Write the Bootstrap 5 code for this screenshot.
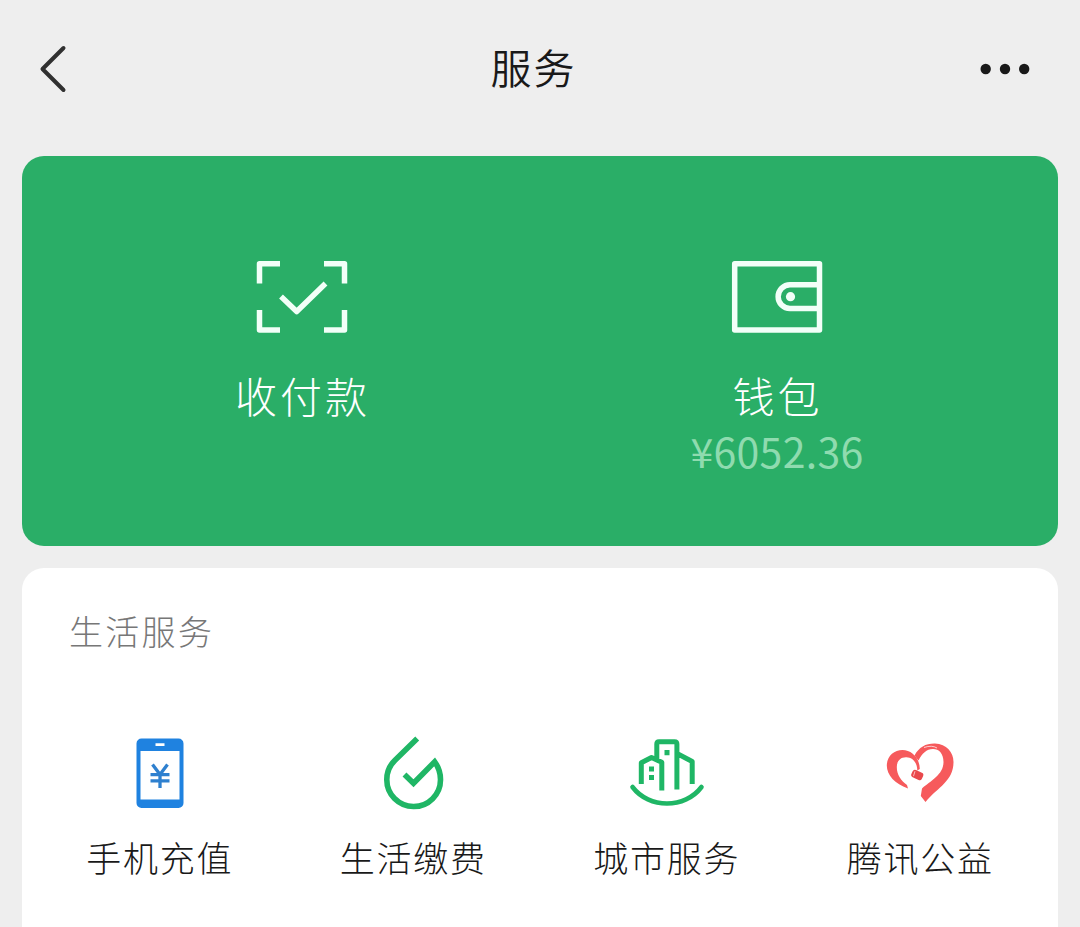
<!DOCTYPE html>
<html lang="zh-CN">
<head>
<meta charset="utf-8">
<meta name="viewport" content="width=device-width, initial-scale=1">
<title>服务</title>
<link href="https://cdn.jsdelivr.net/npm/bootstrap@5.3.0/dist/css/bootstrap.min.css" rel="stylesheet">
<style>
  body { background: #eee; font-family: "Noto Sans CJK SC", sans-serif; font-weight: 300; color: #191919; height: 100vh; }
  svg { display: block; fill: none; }
  .topbar { height: 138px; padding: 0 50px 0 39px; margin-bottom: 18px; }
  .topbar h1 { font-size: 41px; font-weight: 350; line-height: 60px; letter-spacing: 2px; padding-left: 20px; margin-top: -6px; }
  .panel { margin: 0 22px; border-radius: 22px; }
  .pay { background: #2aae67; height: 389.5px; padding: 105px 44px 0 42px; margin-bottom: 22.5px; }
  .pay-label { font-size: 42px; line-height: 60px; letter-spacing: 3px; margin: 32px -2px 0 0; }
  .amount { font-size: 41px; font-weight: 400; line-height: 40px; letter-spacing: .3px; color: #8fdbaf; margin: 5px 0 0 1px; }
  .life { border-radius: 22px 22px 0 0; padding: 43px 11px 0; }
  .life h2 { font-size: 34px; font-weight: 300; line-height: 40px; letter-spacing: 2.3px; color: #777; margin: 0 0 82px 36px; }
  .service-icon { height: 80px; }
  .service-label { font-size: 35px; line-height: 50px; letter-spacing: 1.7px; margin: 19px 0 0; }
</style>
</head>
<body class="d-flex flex-column overflow-hidden">
<header class="topbar d-flex align-items-center justify-content-between flex-shrink-0">
  <svg width="28" height="48" viewBox="39 45 28 48" stroke="#303030" stroke-width="4" stroke-linecap="round" stroke-linejoin="round"><path d="M63.500 48 42.500 69 63.500 90"/></svg>
  <h1 class="mb-0">服务</h1>
  <svg width="50" height="12" viewBox="980 63 50 12"><g fill="#191919"><circle cx="985.700" cy="69" r="5.200"/><circle cx="1005" cy="69" r="5.200"/><circle cx="1024.200" cy="69" r="5.200"/></g></svg>
</header>

<section class="panel pay flex-shrink-0">
  <div class="row g-0 text-center text-white">
    <div class="col-6 d-flex flex-column align-items-center">
      <svg width="92" height="72" viewBox="256 261 92 72" stroke="#f2fff8" stroke-width="5.500" stroke-linejoin="round"><path d="M259.500 283.500v-19.700H280M324 263.800h20.500v19.700M344.500 310v20H324M280 330h-20.500v-20M281 296.500l15.700 15L325.500 283.500"/></svg>
      <div class="pay-label">收付款</div>
    </div>
    <div class="col-6 d-flex flex-column align-items-center">
      <svg width="92" height="72" viewBox="731 261 92 72" stroke="#f2fff8" stroke-width="5.500" stroke-linejoin="round"><rect x="734.700" y="263.800" width="84.800" height="66.200"/><path d="M819.500 284.800H790a11.800 11.800 0 0 0 0 23.700h29.500"/><circle cx="790.500" cy="296.700" r="4.600" fill="#f2fff8" stroke="none"/></svg>
      <div class="pay-label">钱包</div>
      <div class="amount">¥6052.36</div>
    </div>
  </div>
</section>

<section class="panel life bg-white flex-grow-1">
  <h2>生活服务</h2>
  <div class="row g-0 text-center">
    <div class="col-3 d-flex flex-column align-items-center">
      <svg class="service-icon" width="80" viewBox="120 733 80 80"><path fill="#1f82e0" fill-rule="evenodd" d="M141.500 738.500h37a5 5 0 0 1 5 5v59.500a5 5 0 0 1-5 5h-37a5 5 0 0 1-5-5v-59.500a5 5 0 0 1 5-5zM140.500 751v48.500h39V751zM155.500 743.300v2.700h9v-2.700z"/><path stroke="#2e80cf" stroke-width="3.300" d="M152.500 764.500 160 774.500 167.500 764.500M160 774v14M150.500 774.600h19M150.500 780.800h19"/></svg>
      <div class="service-label">手机充值</div>
    </div>
    <div class="col-3 d-flex flex-column align-items-center">
      <svg class="service-icon" width="80" viewBox="373 733 80 80" stroke="#1fb665" stroke-width="5.600"><path d="M417.200 738.500 395 760.200C389.500 765.500 386.800 771 386.800 779.500A26.800 26.800 0 0 0 413.500 806.500A26.800 26.800 0 0 0 440.500 779.500C440.500 772.500 438.500 767 434.700 761.800L413.500 783.200 404.500 774.500"/></svg>
      <div class="service-label">生活缴费</div>
    </div>
    <div class="col-3 d-flex flex-column align-items-center">
      <svg class="service-icon" width="80" viewBox="627 733 80 80" stroke="#1fb665" stroke-width="5" stroke-linejoin="round"><path d="M641.300 784V762.800L651.500 757.500 661.800 762.300V790.500M656.800 760V744Q656.800 741.800 659 741.800H674.500Q676.900 741.800 676.900 744V789.500M677 753.500 692.200 761.500V784"/><path stroke-linecap="round" stroke-width="4.600" d="M632.500 787C649 809 685 809 701.500 787"/><path fill="#1fb665" stroke="none" d="M664.500 750h5v5.200h-5zM649 766.500h5v5h-5zM649 775h5v5h-5z"/></svg>
      <div class="service-label">城市服务</div>
    </div>
    <div class="col-3 d-flex flex-column align-items-center">
      <svg class="service-icon" width="80" viewBox="880 733 80 80"><path fill="#f65a5c" d="M908 788.500C895 784 886.800 775 886.800 765.500C887 756 894 750 902.500 750C911 750 919.500 757 919.800 769L917.300 770.500C917.300 762.500 912.500 757.500 906.500 757.300C900 757 896.800 761.500 896.800 767C896.800 775 901 780.500 907 785Z"/><path fill="#f65a5c" d="M914.500 755.500C919 747 926 743.300 935 743.500C946.500 744 953.500 752 953.500 762C953.500 781 938 787 925.500 802L920.800 796 922 788.500C930 781 943.500 775 943.500 762C943.500 753.500 939 749 933 749C926.500 749 922 753.500 918.500 760.500Z"/><path stroke="#fff" stroke-width=".7" d="M924 747.500Q932 744.800 937 748"/><rect x="911.500" y="771" width="11.500" height="7.800" rx="2.500" transform="rotate(25 917 775)" fill="#e9484c"/><path d="M915 771.200l-1.500 5" stroke="#fbb" stroke-width="1"/></svg>
      <div class="service-label">腾讯公益</div>
    </div>
  </div>
</section>
<script src="https://cdn.jsdelivr.net/npm/bootstrap@5.3.0/dist/js/bootstrap.bundle.min.js"></script>
</body>
</html>
